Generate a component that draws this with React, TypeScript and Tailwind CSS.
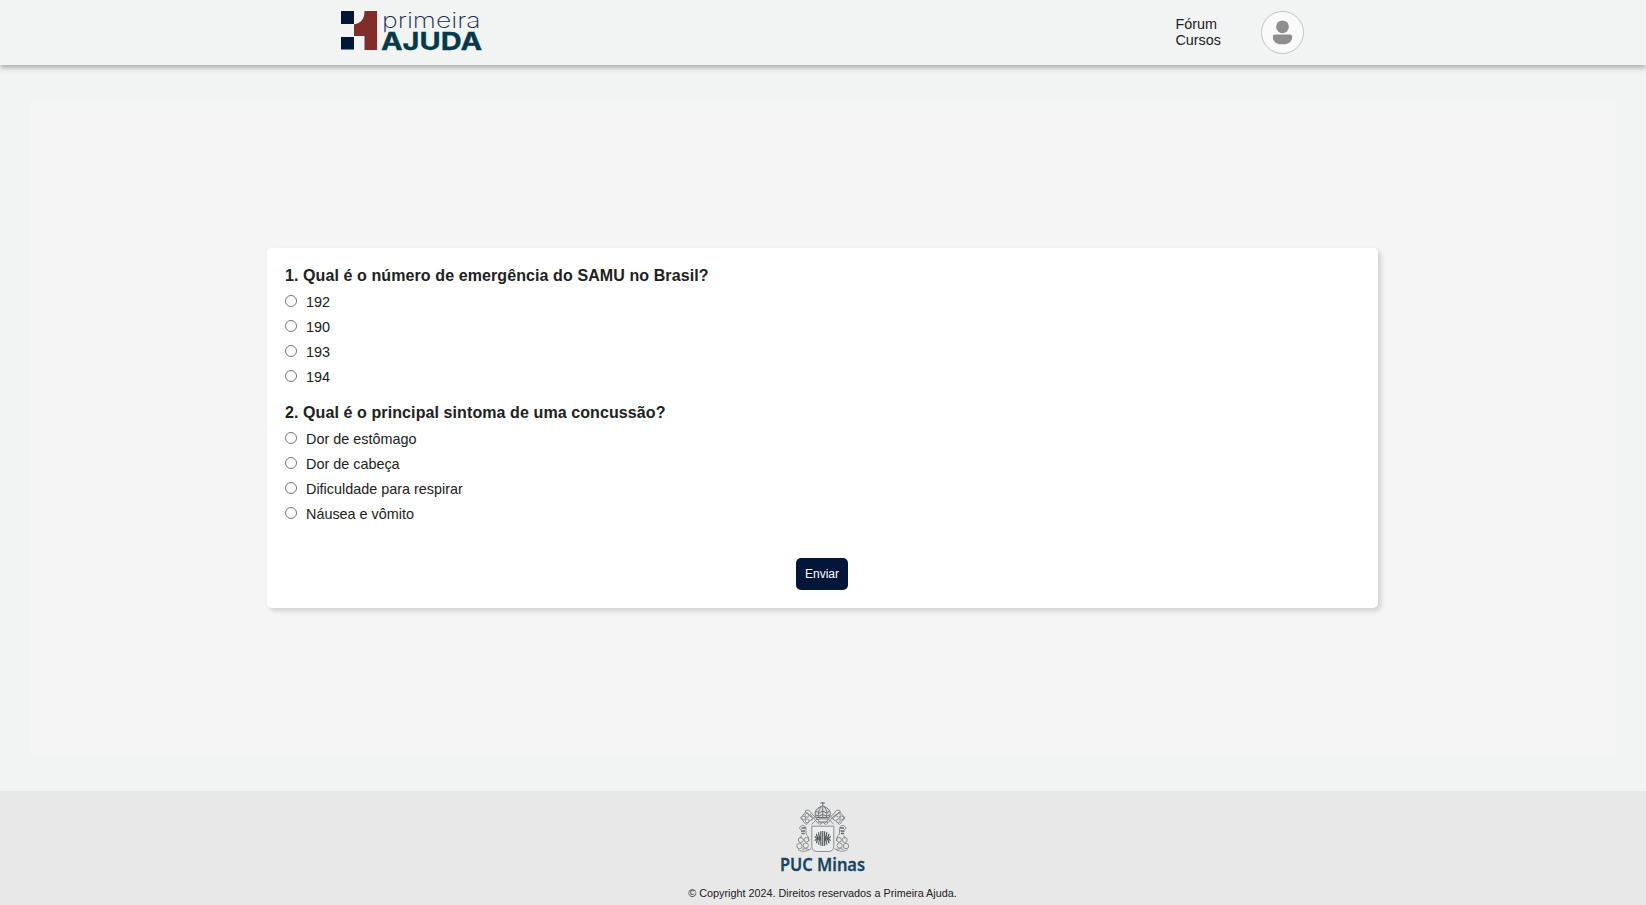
const quiz = [
  {
    title: "1. Qual é o número de emergência do SAMU no Brasil?",
    options: ["192", "190", "193", "194"],
  },
  {
    title: "2. Qual é o principal sintoma de uma concussão?",
    options: ["Dor de estômago", "Dor de cabeça", "Dificuldade para respirar", "Náusea e vômito"],
  },
];

function Logo() {
  return (
    <svg width="146" height="50" viewBox="0 0 146 50" className="overflow-visible" role="img" aria-label="Primeira Ajuda">
      <path d="M0 0h13v13H0zM0 26h13v12.500H0z" fill="#02163a" />
      <path d="M13 13.200C20 12.500 23.500 8 23.500 0H36v39H23.500V25H13z" fill="#802d29" />
      <text x="41" y="17" fontFamily="Inter, sans-serif" fontWeight="200" fontSize="22" textLength="98.500" lengthAdjust="spacingAndGlyphs" fill="#1b2a55">primeira</text>
      <text x="40" y="39.300" fontFamily="Inter, sans-serif" fontWeight="700" fontSize="24.500" textLength="101" lengthAdjust="spacingAndGlyphs" fill="#043a4b" stroke="#043a4b" strokeWidth="0.3">AJUDA</text>
    </svg>
  );
}

function Avatar() {
  return (
    <svg width="43" height="43" viewBox="0 0 43 43" aria-hidden="true">
      <circle cx="21.500" cy="21.500" r="21" fill="#fafafa" stroke="#c2c2c2" />
      <circle cx="21.500" cy="15.800" r="6.400" fill="#8e8e8e" />
      <path d="M14.200 23.500h14.600a2.400 2.400 0 0 1 2.400 2.400c0 4.600-3.600 7.400-9.700 7.400s-9.700-2.800-9.700-7.400a2.400 2.400 0 0 1 2.400-2.400z" fill="#8e8e8e" />
    </svg>
  );
}

function CrestSide() {
  return (
    <g>
      <path d="M4.500 16l5-6 3 2.500 4 4-6.500 6zM10.500 10l5 5" />
      <circle cx="7.700" cy="16" r="1.900" />
      <circle cx="11" cy="13.300" r="1.900" />
      <circle cx="11.200" cy="18.800" r="1.900" />
      <path d="M9.500 10v-1.500l3-.5 12.500 13.500M14 12l9 10.500M15 18.500l4-3.500M15.500 22.500l6-6" />
      <path d="M3.500 26.500c.5-4 6-4 6.500 0v5.500M3.500 26.500l2 1.500M6 34c-2 0-2 1.500-1 2.500M10 32c2 2 3 4 3 7" />
      <path d="M5.500 26h4M5 29h4M5.500 31.500h3" stroke="#62676a" strokeWidth="1.700" />
      <circle cx="4.800" cy="38" r="2.500" />
      <circle cx="10.500" cy="37.800" r="2.300" />
      <circle cx="3.500" cy="44" r="2.700" />
      <circle cx="9.800" cy="43.500" r="2.600" />
      <path d="M2 47.500c3 2.500 9 2.500 13-1M6 47.500l3-1 4 1" />
    </g>
  );
}

function Crest() {
  return (
    <svg width="54" height="51" viewBox="0 0 54 51" fill="none" stroke="#8b8f91" strokeWidth="1" aria-hidden="true">
      <CrestSide />
      <g transform="translate(53.500 0) scale(-1 1)">
        <CrestSide />
      </g>
      <path d="M26.700 0v5M24.500 1h4.400" stroke="#686d70" />
      <path d="M20.500 15.500c-4-5 1-10.500 6.200-11.500 5.200 1 10.200 6.500 6.200 11.500z" fill="#dcdcdc" stroke="#686d70" />
      <path d="M23 15c-1-3.500-.5-7 2-10M30.400 15c1-3.500.5-7-2-10M26.700 5v10M20 9l3 2 3.700-2 3.700 2 3-2M19.500 13l3.500 1 3.700-1.500 3.700 1.500 3.500-1" stroke="#686d70" strokeWidth="0.900" />
      <path d="M21 17.500c4-1 7.500-1 11.500 0M22 20h10M24 22.500l2.700-2.500 2.700 2.500" stroke="#777b7e" />
      <path d="M15.800 24.200h22V44c0 3.500-2 5.500-5 5.500H20.800c-3 0-5-2-5-5.500z" fill="#ededed" />
      <path
        d="M26.700 29v15M24.800 29.200v14.600M28.600 29.200v14.600M22.600 30.200c0 3 .4 4.300 1.600 6.300-1.200 2-1.600 3.300-1.600 6.300M30.800 30.200c0 3-.4 4.300-1.600 6.300 1.200 2 1.600 3.300 1.600 6.300M20.500 31.800c0 2.200.8 3.700 2.600 4.700-1.800 1-2.600 2.500-2.600 4.700M32.900 31.800c0 2.200-.8 3.700-2.600 4.700 1.800 1 2.600 2.500 2.600 4.700M18.800 34.200c.6 1.300 1.500 2 3 2.300-1.500.3-2.400 1-3 2.300M34.600 34.200c-.6 1.300-1.500 2-3 2.300 1.500.3 2.400 1 3 2.300"
        stroke="#565c5f"
        strokeWidth="1.200"
      />
    </svg>
  );
}

export default function App() {
  return (
    <div className="flex h-[905px] flex-col bg-[#f1f4f3] font-['Liberation_Sans',Arial,sans-serif] text-[#212121]">
      <header className="z-10 flex h-[65px] shrink-0 justify-between bg-[#f1f4f3] pr-[342px] pl-[341px] shadow-[0_3px_5px_rgba(0,0,0,0.28)]">
        <div className="pt-[11px]">
          <Logo />
        </div>
        <div className="flex items-start gap-[40px] pt-[11px]">
          <nav className="flex flex-col pt-[5px] text-[14.400px] leading-4">
            <a>Fórum</a>
            <a>Cursos</a>
          </nav>
          <Avatar />
        </div>
      </header>

      <main className="mr-[30px] ml-[29px] my-9 flex flex-1 items-center justify-center bg-[#f5f5f5]">
        <form className="flex h-[360px] w-[1111px] flex-col rounded-[5px] bg-white px-[18px] pt-[18px] shadow-[3px_3px_5px_rgba(0,0,0,0.15)]">
          {quiz.map((q, n) => (
            <fieldset key={q.title} className="h-[137px]">
              <legend className="text-[16px] leading-[20px] font-bold tracking-[0.095px] whitespace-nowrap">{q.title}</legend>
              <div className="flex flex-col pt-[5px]">
                {q.options.map((o) => (
                  <label key={o} className="flex h-[25px] items-start gap-[9px] pt-[3px] text-[14.400px] leading-4">
                    <input type="radio" name={`q${n}`} className="mt-px size-3 shrink-0" />
                    <span>{o}</span>
                  </label>
                ))}
              </div>
            </fieldset>
          ))}
          <button type="button" className="mt-[18px] mr-px h-8 w-[52px] self-center rounded-[5px] bg-[#02163a] text-[12px] text-white">
            Enviar
          </button>
        </form>
      </main>

      <footer className="flex h-[114px] shrink-0 flex-col items-center bg-[#e8e8e8] pt-[11px]">
        <Crest />
        <svg width="88" height="24" viewBox="0 0 88 24" className="overflow-visible">
          <text x="1" y="18.200" fontFamily="Noto Sans, sans-serif" fontWeight="600" fontSize="17.800" textLength="85" lengthAdjust="spacingAndGlyphs" fill="#174565" stroke="#174565" strokeWidth="0.3">PUC Minas</text>
        </svg>
        <p className="mt-[9px] -ml-px text-[10.800px] leading-[14px]">© Copyright 2024. Direitos reservados a Primeira Ajuda.</p>
      </footer>
    </div>
  );
}
